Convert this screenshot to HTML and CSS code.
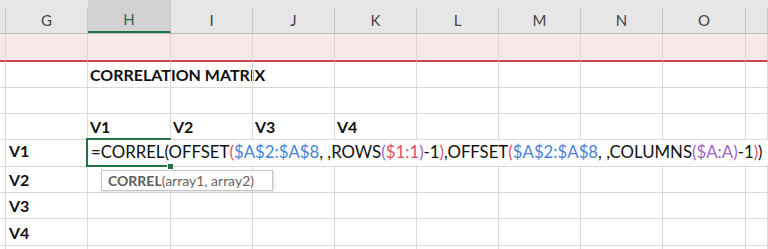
FILE: index.html
```html
<!DOCTYPE html>
<html lang="en">

<head>
    <meta charset="UTF-8">
    <title>Correlation matrix</title>
    <link rel="stylesheet" href="styles.css">
</head>

<body>

    <main class="sheet">
        <!-- column letters -->
        <div class="row head">
            <div class="hc"></div>
            <div class="hc">G</div>
            <div class="hc sel">H</div>
            <div class="hc">I</div>
            <div class="hc">J</div>
            <div class="hc">K</div>
            <div class="hc">L</div>
            <div class="hc">M</div>
            <div class="hc">N</div>
            <div class="hc">O</div>
            <div class="hc"></div>
        </div>

        <div class="row band">
            <div class="c"></div><div class="c"></div><div class="c"></div><div class="c"></div><div class="c"></div><div class="c"></div>
            <div class="c"></div><div class="c"></div><div class="c"></div><div class="c"></div><div class="c"></div>
        </div>

        <div class="row">
            <div class="c"></div>
            <div class="c"></div>
            <div class="c b">CORRELATION MATRIX</div>
            <div class="c"></div><div class="c"></div><div class="c"></div><div class="c"></div>
            <div class="c"></div><div class="c"></div><div class="c"></div><div class="c"></div>
        </div>

        <div class="row">
            <div class="c"></div><div class="c"></div><div class="c"></div><div class="c"></div><div class="c"></div><div class="c"></div>
            <div class="c"></div><div class="c"></div><div class="c"></div><div class="c"></div><div class="c"></div>
        </div>

        <div class="row">
            <div class="c"></div>
            <div class="c"></div>
            <div class="c b">V1</div>
            <div class="c b">V2</div>
            <div class="c b">V3</div>
            <div class="c b">V4</div>
            <div class="c"></div><div class="c"></div><div class="c"></div><div class="c"></div><div class="c"></div>
        </div>

        <div class="row tall edit-row">
            <div class="c"></div>
            <div class="c b">V1</div>
            <div class="c active">
                <div class="outline"></div>
                <div class="editor">=CORREL(OFFSET<span class="p1">(</span><span class="r1">$A$2:$A$8</span>, ,ROWS<span class="p2">(</span><span class="r2">$1:1</span><span class="p2">)</span>-1<span class="p1">)</span>,OFFSET<span class="p1">(</span><span class="r1">$A$2:$A$8</span>, ,COLUMNS<span class="p2">(</span><span class="r3">$A:A</span><span class="p2">)</span>-1<span class="p1">)</span>)</div>
                <div class="handle"></div>
                <div class="tip"><b>CORREL</b>(array1, array2)</div>
            </div>
            <div class="c"></div><div class="c"></div><div class="c"></div><div class="c"></div>
            <div class="c"></div><div class="c"></div><div class="c"></div><div class="c"></div>
        </div>

        <div class="row">
            <div class="c"></div>
            <div class="c b">V2</div>
            <div class="c"></div><div class="c"></div><div class="c"></div><div class="c"></div><div class="c"></div>
            <div class="c"></div><div class="c"></div><div class="c"></div><div class="c"></div>
        </div>

        <div class="row">
            <div class="c"></div>
            <div class="c b">V3</div>
            <div class="c"></div><div class="c"></div><div class="c"></div><div class="c"></div><div class="c"></div>
            <div class="c"></div><div class="c"></div><div class="c"></div><div class="c"></div>
        </div>

        <div class="row tall">
            <div class="c"></div>
            <div class="c b">V4</div>
            <div class="c"></div><div class="c"></div><div class="c"></div><div class="c"></div><div class="c"></div>
            <div class="c"></div><div class="c"></div><div class="c"></div><div class="c"></div>
        </div>

        <div class="row">
            <div class="c"></div><div class="c"></div><div class="c"></div><div class="c"></div><div class="c"></div><div class="c"></div>
            <div class="c"></div><div class="c"></div><div class="c"></div><div class="c"></div><div class="c"></div>
        </div>
    </main>

</body>

</html>
```

FILE: styles.css
```css
body {
    margin: 0;
    background-color: #fff;
    font-family: Lato, "Open Sans", sans-serif;
    overflow: hidden;
}

.sheet {
    width: 768px;
    height: 249px;
    overflow: hidden;
}

.row {
    display: grid;
    grid-template-columns: 6px 82px 83px 82px 82px 82px 82px 82px 82px 83px 1fr;
    height: 26px;
}

.row.tall {
    height: 27px;
}

/* column letters */
.head {
    height: 34px;
    background-color: #e6e6e6;
    border-bottom: 1px solid #bdbdbd;
    box-sizing: border-box;
}

.hc {
    margin-top: 8px;
    border-right: 1px solid #c8c8c8;
    color: #444;
    font-size: 15px;
    text-align: center;
    line-height: 25px;
}

.hc.sel {
    margin-top: 0;
    padding-top: 8px;
    background-color: #d2d2d2;
    color: #2e6b48;
    border-bottom: 2px solid #217346;
    line-height: 23px;
}

/* cells */
.c {
    border-right: 1px solid #dadada;
    border-bottom: 1px solid #dadada;
    display: flex;
    align-items: flex-end;
    padding: 0 0 2px 2px;
    font-size: 16px;
    line-height: 20px;
    color: #111;
    white-space: nowrap;
    min-width: 0;
}

.c.b {
    font-weight: bold;
}

.row .c:nth-child(2) {
    padding-left: 3px;
}

.band {
    height: 28px;
    background-color: #f9e8e8;
}

.band .c {
    border-right-color: #e4d2d2;
    border-bottom: 2px solid #c9464f;
}

.edit-row .c {
    padding-bottom: 5px;
}

/* active cell while typing */
.active {
    position: relative;
    overflow: visible;
}

.outline {
    position: absolute;
    left: -2px;
    top: -2px;
    width: 81px;
    height: 25px;
    border: 2px solid #217346;
}

.editor {
    position: absolute;
    left: 0;
    top: 0;
    height: 25px;
    width: 700px;
    padding-left: 3px;
    background-color: #fff;
    color: #111;
    font-size: 16.8px;
    line-height: 20px;
    box-sizing: border-box;
    padding-top: 2px;
    z-index: 2;
}

.r1 { color: #4a82dd; }
.r2 { color: #e0506a; }
.r3 { color: #a263cc; }
.p1 { color: #e0506a; }
.p2 { color: #a263cc; }

.handle {
    position: absolute;
    left: 79px;
    top: 23px;
    width: 5px;
    height: 5px;
    background-color: #217346;
    border: 1px solid #fff;
    z-index: 3;
}

.tip {
    position: absolute;
    left: 13px;
    top: 30px;
    width: 172px;
    height: 21px;
    box-sizing: border-box;
    padding-left: 6px;
    border: 1px solid #c6c6c6;
    background-color: #fff;
    box-shadow: 1px 1px 2px rgba(0, 0, 0, 0.12);
    color: #666;
    font-size: 14px;
    font-weight: normal;
    line-height: 19px;
    z-index: 4;
}

.tip b {
    color: #5e5e5e;
}
```
